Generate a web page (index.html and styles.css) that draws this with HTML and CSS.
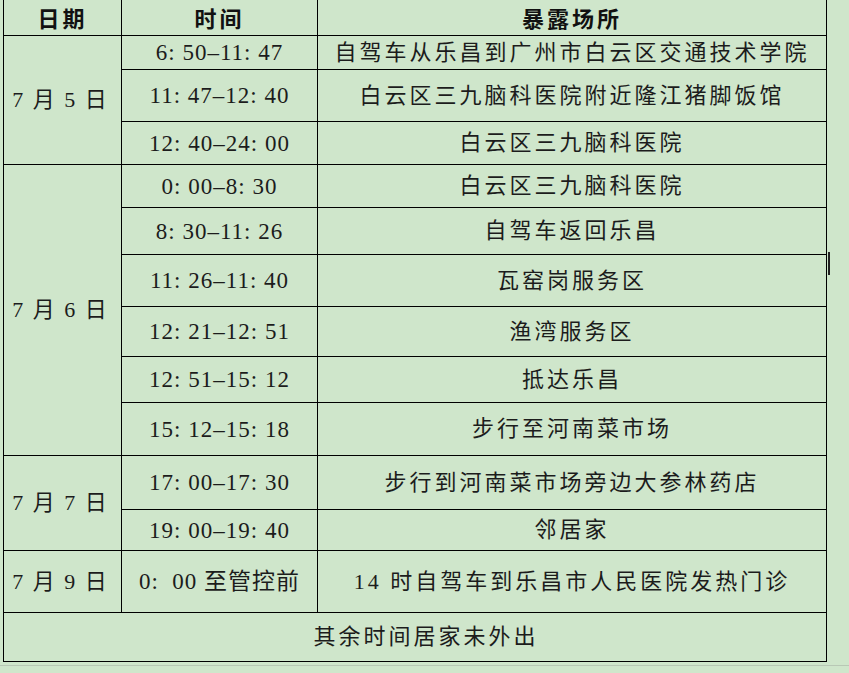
FILE: index.html
```html
<!DOCTYPE html>
<html lang="zh-CN">
<head>
<meta charset="utf-8">
<title>暴露场所</title>
<link rel="stylesheet" href="styles.css">
</head>
<body>
<div class="page">
<table class="trace">
  <colgroup>
    <col class="c-date">
    <col class="c-time">
    <col class="c-place">
  </colgroup>
  <tr class="r-head">
    <th>日期</th>
    <th>时间</th>
    <th>暴露场所</th>
  </tr>
  <tr class="h34">
    <td class="date" rowspan="3">7 月 5 日</td>
    <td class="time">6: 50–11: 47</td>
    <td>自驾车从乐昌到广州市白云区交通技术学院</td>
  </tr>
  <tr class="h52">
    <td class="time">11: 47–12: 40</td>
    <td>白云区三九脑科医院附近隆江猪脚饭馆</td>
  </tr>
  <tr class="h43">
    <td class="time">12: 40–24: 00</td>
    <td>白云区三九脑科医院</td>
  </tr>
  <tr class="h43">
    <td class="date" rowspan="6">7 月 6 日</td>
    <td class="time">0: 00–8: 30</td>
    <td>白云区三九脑科医院</td>
  </tr>
  <tr class="h47">
    <td class="time">8: 30–11: 26</td>
    <td>自驾车返回乐昌</td>
  </tr>
  <tr class="h52">
    <td class="time">11: 26–11: 40</td>
    <td>瓦窑岗服务区</td>
  </tr>
  <tr class="h50">
    <td class="time">12: 21–12: 51</td>
    <td>渔湾服务区</td>
  </tr>
  <tr class="h46">
    <td class="time">12: 51–15: 12</td>
    <td>抵达乐昌</td>
  </tr>
  <tr class="h53">
    <td class="time">15: 12–15: 18</td>
    <td>步行至河南菜市场</td>
  </tr>
  <tr class="h54">
    <td class="date" rowspan="2">7 月 7 日</td>
    <td class="time">17: 00–17: 30</td>
    <td>步行到河南菜市场旁边大参林药店</td>
  </tr>
  <tr class="h41">
    <td class="time">19: 00–19: 40</td>
    <td>邻居家</td>
  </tr>
  <tr class="h62">
    <td class="date">7 月 9 日</td>
    <td class="time">0:&nbsp; 00 至管控前</td>
    <td>14 时自驾车到乐昌市人民医院发热门诊</td>
  </tr>
  <tr class="h49">
    <td class="rest" colspan="3">其余时间居家未外出</td>
  </tr>
</table>
<div class="resize-mark"></div>
<div class="sheet-line"></div>
</div>
</body>
</html>
```

FILE: styles.css
```css
html, body {
  margin: 0;
  padding: 0;
  background: #cfe6cb;
}
body {
  width: 849px;
  height: 673px;
  overflow: hidden;
  font-family: "Liberation Serif", "Noto Sans CJK SC", serif;
  color: #1c1c1c;
}
.page {
  position: relative;
  width: 849px;
  height: 673px;
}
.trace {
  border-collapse: collapse;
  table-layout: fixed;
  width: 823px;
  margin: -2px 0 0 3px;
}
.c-date { width: 118px; }
.c-time { width: 196px; }
.c-place { width: 509px; }
.trace th,
.trace td {
  border: 1px solid #000;
  padding: 0;
  text-align: center;
  vertical-align: middle;
  font-size: 22px;
  letter-spacing: 3px;
  font-weight: normal;
  line-height: 1;
  white-space: nowrap;
}
.trace th {
  font-family: "Noto Sans CJK SC", sans-serif;
  font-weight: bold;
  color: #111;
}
.trace td.time {
  font-size: 23px;
  letter-spacing: 1px;
}
.trace td.date {
  letter-spacing: 2px;
  padding-right: 4px;
}
.trace td.rest {
  padding-left: 22px;
}
.r-head { height: 37px; }
.h34 { height: 34px; }
.h41 { height: 41px; }
.h43 { height: 43px; }
.h46 { height: 46px; }
.h47 { height: 47px; }
.h49 { height: 49px; }
.h50 { height: 50px; }
.h52 { height: 52px; }
.h53 { height: 53px; }
.h54 { height: 54px; }
.h62 { height: 62px; }
.resize-mark {
  position: absolute;
  left: 828px;
  top: 254px;
  width: 2px;
  height: 23px;
  background: #222;
}
.sheet-line {
  position: absolute;
  left: 0;
  top: 667px;
  width: 849px;
  height: 1px;
  background: #b8c8b5;
}
```
